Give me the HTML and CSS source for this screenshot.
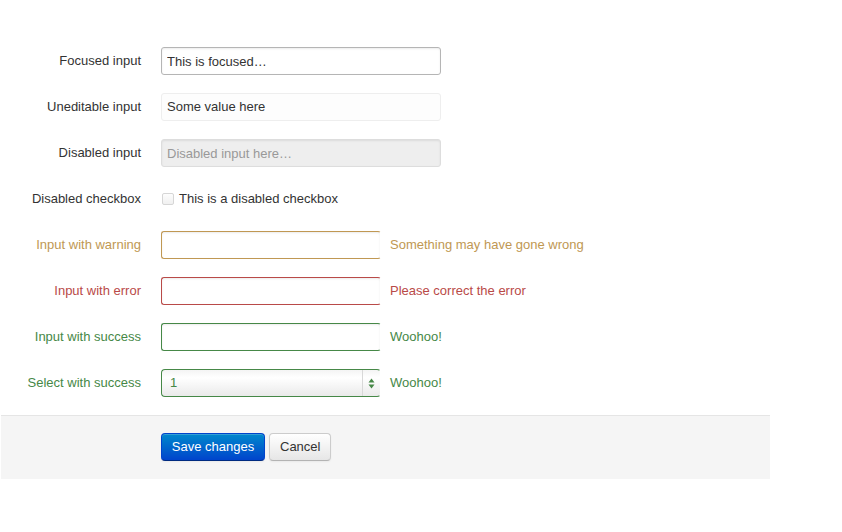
FILE: index.html
```html
<!DOCTYPE html>
<html lang="en">
<head>
  <meta charset="UTF-8" />
  <title>Form control states</title>
  <link rel="stylesheet" href="styles.css">
</head>
<body>
  <form class="form-horizontal">
    <div class="control-group">
      <label class="control-label">Focused input</label>
      <div class="controls">
        <input class="input-xlarge focused" type="text" value="This is focused…">
      </div>
    </div>
    <div class="control-group">
      <label class="control-label">Uneditable input</label>
      <div class="controls">
        <span class="input-xlarge uneditable-input">Some value here</span>
      </div>
    </div>
    <div class="control-group">
      <label class="control-label">Disabled input</label>
      <div class="controls">
        <input class="input-xlarge" type="text" placeholder="Disabled input here…" disabled>
      </div>
    </div>
    <div class="control-group">
      <label class="control-label">Disabled checkbox</label>
      <div class="controls">
        <label class="checkbox"><span class="box"></span>This is a disabled checkbox</label>
      </div>
    </div>
    <div class="control-group warning">
      <label class="control-label">Input with warning</label>
      <div class="controls">
        <input type="text">
        <span class="help-inline">Something may have gone wrong</span>
      </div>
    </div>
    <div class="control-group error">
      <label class="control-label">Input with error</label>
      <div class="controls">
        <input type="text">
        <span class="help-inline">Please correct the error</span>
      </div>
    </div>
    <div class="control-group success">
      <label class="control-label">Input with success</label>
      <div class="controls">
        <input type="text">
        <span class="help-inline">Woohoo!</span>
      </div>
    </div>
    <div class="control-group success">
      <label class="control-label">Select with success</label>
      <div class="controls">
        <div class="select">
          <span class="select-value">1</span>
          <span class="select-arrows">
            <svg width="7" height="11" viewBox="0 0 7 11">
              <path d="M3.5 0.5 L6.5 4.5 L0.5 4.5 Z" fill="#468847"/>
              <path d="M3.5 10.5 L6.5 6.5 L0.5 6.5 Z" fill="#468847"/>
            </svg>
          </span>
        </div>
        <span class="help-inline">Woohoo!</span>
      </div>
    </div>
    <div class="form-actions">
      <button type="button" class="btn btn-primary">Save changes</button>
      <button type="button" class="btn">Cancel</button>
    </div>
  </form>
</body>
</html>
```

FILE: styles.css
```css
body {
  margin: 0;
  padding: 0;
  background-color: #fff;
  color: #333;
  font-family: 'Liberation Sans', Arial, sans-serif;
  font-size: 13px;
  line-height: 18px;
}
.form-horizontal {
  width: 769px;
  margin-left: 1px;
  padding-top: 47px;
}
.control-group {
  display: flex;
  align-items: center;
  height: 28px;
  margin-bottom: 18px;
}
.control-label {
  width: 140px;
  text-align: right;
  margin-right: 20px;
  flex-shrink: 0;
}
.controls {
  display: flex;
  align-items: center;
}
input[type="text"], .uneditable-input {
  box-sizing: border-box;
  width: 220px;
  height: 28px;
  padding: 4px 5px;
  margin: 0;
  font-family: inherit;
  font-size: 13px;
  line-height: 18px;
  color: #555;
  background-color: #fff;
  border: 1px solid #ccc;
  border-radius: 3px;
  box-shadow: inset 0 1px 2px rgba(0, 0, 0, 0.08);
  outline: none;
}
.input-xlarge {
  width: 280px !important;
}
.focused {
  color: #333 !important;
  border-color: #b5b5b5 !important;
}
.uneditable-input {
  display: block;
  color: #333;
  background-color: #fdfdfd;
  border-color: #eee;
  box-shadow: none;
}
input[disabled] {
  background-color: #eee;
  border-color: #ddd;
}
input[disabled]::placeholder {
  color: #999;
}
.checkbox {
  display: flex;
  align-items: center;
}
.checkbox .box {
  width: 10px;
  height: 10px;
  margin: 0 5px 0 1px;
  border: 1px solid #d6d6d6;
  border-radius: 2px;
  background: linear-gradient(#fdfdfd, #f0f0f0);
}
.help-inline {
  padding-left: 9px;
}
.warning .control-label, .warning .help-inline { color: #c09853; }
.warning input[type="text"] { border-color: #c09853; border-right-color: #fff; }
.error .control-label, .error .help-inline { color: #b94a48; }
.error input[type="text"] { border-color: #b94a48; border-right-color: #fff; }
.success .control-label, .success .help-inline { color: #468847; }
.success input[type="text"] { border-color: #468847; border-right-color: #fff; }
.select {
  box-sizing: border-box;
  width: 220px;
  height: 28px;
  display: flex;
  align-items: center;
  border: 1px solid #468847;
  border-right-color: #fff;
  border-radius: 4px;
  background: linear-gradient(#f4f4f4, #fff 30%, #eaeaea);
  color: #468847;
}
.select-value {
  flex: 1;
  padding-left: 8px;
}
.select-arrows {
  width: 17px;
  height: 26px;
  border-left: 1px solid #d8d8d8;
  display: flex;
  align-items: center;
  justify-content: center;
}
.form-actions {
  padding: 17px 20px 18px 160px;
  background-color: #f5f5f5;
  border-top: 1px solid #e5e5e5;
  display: flex;
  gap: 4px;
}
.btn {
  box-sizing: border-box;
  height: 28px;
  padding: 4px 10px;
  font-family: inherit;
  font-size: 13px;
  line-height: 18px;
  white-space: nowrap;
  color: #333;
  background: linear-gradient(#fff, #e6e6e6);
  border: 1px solid #ccc;
  border-bottom-color: #b3b3b3;
  border-radius: 4px;
  box-shadow: inset 0 1px 0 rgba(255, 255, 255, 0.2), 0 1px 2px rgba(0, 0, 0, 0.05);
  cursor: pointer;
}
.btn-primary {
  width: 104px;
  padding: 4px 6px;
  color: #fff;
  background: linear-gradient(#0088cc, #0044cc);
  border-color: #0044cc #0044cc #002a80;
}
```
